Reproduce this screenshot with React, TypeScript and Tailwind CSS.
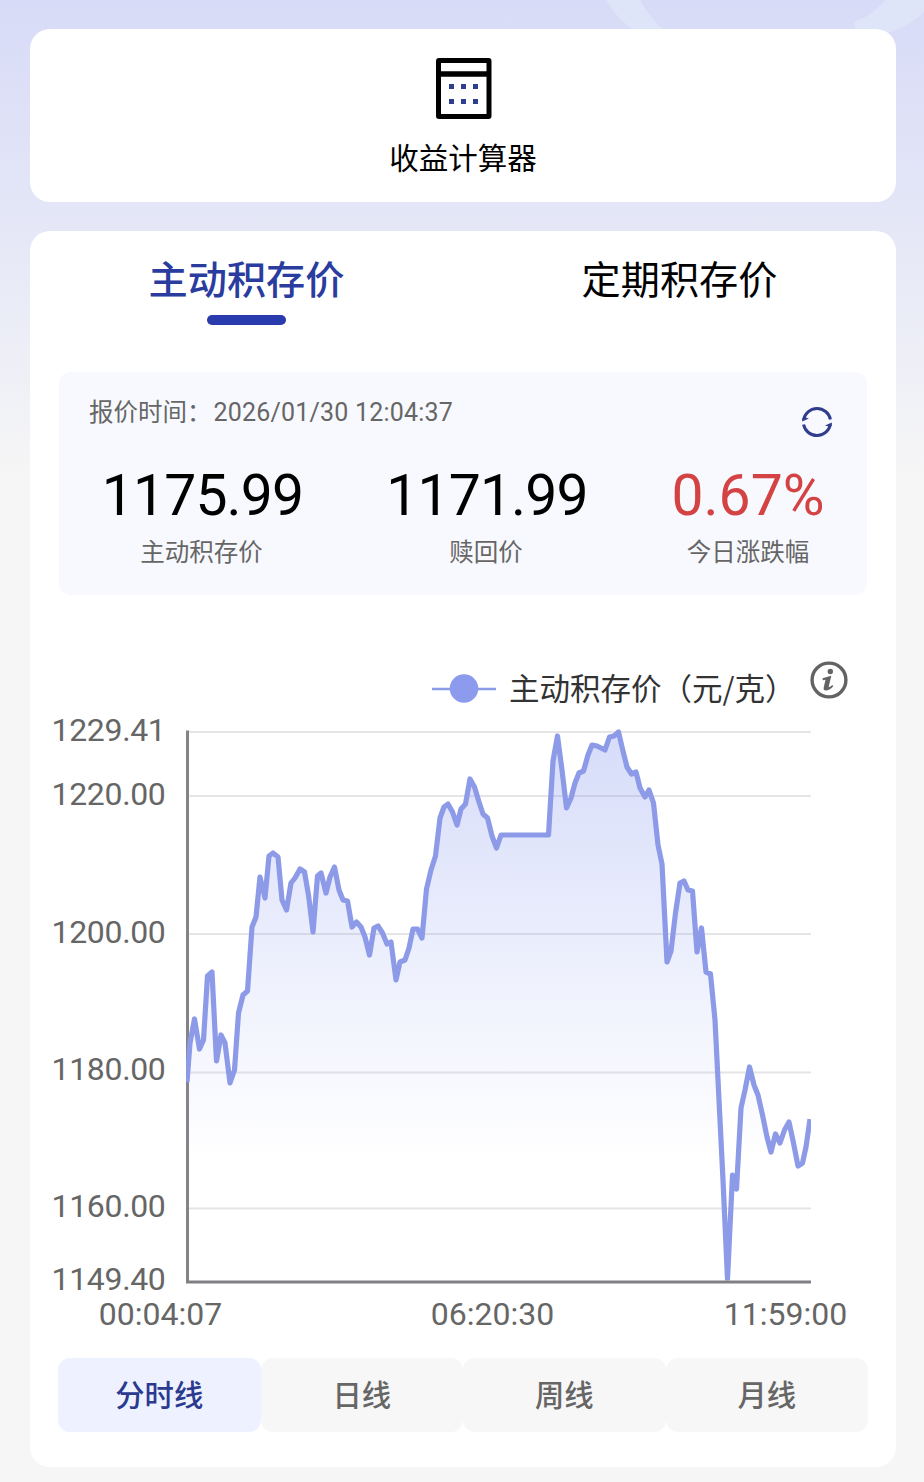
import { useState } from 'react';

const priceTabs = ['主动积存价', '定期积存价'];
const periods = ['分时线', '日线', '周线', '月线'];

const quotes = [
  { value: '1175.99', label: '主动积存价', width: 'w-[285px]', color: 'text-black tracking-[-0.8px] pl-[2px]' },
  { value: '1171.99', label: '赎回价', width: 'w-[284px]', color: 'text-black tracking-[-0.8px] pl-[2px]' },
  { value: '0.67%', label: '今日涨跌幅', width: 'w-[240px]', color: 'text-[#d34343]' },
];

const yTicks = [
  { label: '1229.41', y: 732, textY: 740.5 },
  { label: '1220.00', y: 796, textY: 804.5 },
  { label: '1200.00', y: 934, textY: 942.5 },
  { label: '1180.00', y: 1072.5, textY: 1080 },
  { label: '1160.00', y: 1208.5, textY: 1216.5 },
  { label: '1149.40', y: 0, textY: 1289.5 },
];

const xTicks = [
  { label: '00:04:07', x: 160.5 },
  { label: '06:20:30', x: 492.5 },
  { label: '11:59:00', x: 785.5 },
];

// price points, in chart units
const points = [
  [187, 1082], [190, 1043], [194.5, 1019], [199.5, 1049], [203.5, 1040], [207.5, 976], [212, 972],
  [216.5, 1061], [221, 1035], [225, 1043], [230, 1083], [234.5, 1070], [238.5, 1013], [243, 995],
  [247.5, 991], [252, 927], [256, 917], [260, 877], [265, 898], [269, 856], [273, 853], [278, 857],
  [282, 900], [286.5, 910], [291, 883], [295, 878], [300, 869], [304.5, 872], [308.5, 895], [313, 932],
  [317.5, 876], [321, 873], [326, 893], [330, 877], [334.5, 867], [339, 890], [343, 900], [347.5, 901],
  [352, 927], [356.5, 922], [361, 927], [365, 937], [369.5, 955], [374, 928], [378, 926], [382.5, 933],
  [387, 944], [391, 942], [396, 980], [400, 962], [405, 960], [409, 948], [413, 929], [417.5, 929],
  [422, 938], [426.5, 889], [431, 870], [435.5, 856], [440, 818], [444, 807], [448, 804], [452.5, 812],
  [457, 825], [461, 809], [465.5, 804], [470, 779], [474.5, 787], [479, 802], [483, 814], [487.5, 818],
  [492, 836], [496.5, 848], [501, 835], [548.5, 835], [553, 761], [557.5, 736], [562, 770], [566.5, 808],
  [571, 798], [575, 783], [579, 773], [583.5, 771], [588, 755], [592, 745], [597, 746], [601, 748],
  [605, 750], [609.5, 737], [614, 736], [618.5, 732], [622.5, 749], [627, 767], [631.5, 774], [636, 772],
  [640, 788], [645, 797], [649, 790], [653.5, 803], [658, 845], [662, 864], [667, 962], [671, 951],
  [675.5, 913], [680, 883], [684, 881], [688, 890], [692.5, 891], [697, 952], [701.5, 928], [706, 972],
  [710.5, 974], [715, 1020], [719, 1100], [723, 1180], [727.5, 1279], [732.5, 1175], [736.5, 1189],
  [741, 1108], [745, 1090], [749.5, 1067], [754, 1085], [758, 1095], [762.5, 1115], [767, 1137],
  [771, 1152], [775.5, 1134], [780, 1143], [784.5, 1130], [789, 1122], [793.5, 1143], [798, 1166],
  [802.5, 1163], [806, 1147], [810, 1119],
];

const linePath = 'M' + points.map(([x, y]) => `${x} ${y}`).join('L');

function CalculatorIcon() {
  return (
    <svg className="ml-px" width="56" height="61" viewBox="0 0 56 61">
      <rect x="2.5" y="2.5" width="50.5" height="56" rx="0.5" fill="none" stroke="#000" strokeWidth="5" />
      <path d="M2 16h51" stroke="#000" strokeWidth="5.5" />
      <path d="M13 28.5h29M13 43.5h29" stroke="#2e3f8f" strokeWidth="5" strokeDasharray="5 7" />
    </svg>
  );
}

function RefreshIcon() {
  return (
    <svg width="32" height="32" viewBox="0 0 32 32" fill="none" stroke="#2f3d8c" strokeWidth="3">
      <path d="M2.6 14A13.6 13.6 0 0 1 29.4 13.5" />
      <path d="M29.4 18A13.6 13.6 0 0 1 2.6 18.5" />
      <path d="M1 15.5 1.5 12 4 11.5 8 12.5zM31 16.5 30.5 20 28 20.5 24 19.5z" fill="#2f3d8c" stroke="none" />
    </svg>
  );
}

function InfoIcon() {
  return (
    <svg width="38" height="38" viewBox="0 0 38 38">
      <circle cx="19" cy="19" r="16.9" fill="none" stroke="#636363" strokeWidth="3.4" />
      <circle cx="20.3" cy="10.5" r="2.7" fill="#636363" />
      <path
        d="M12.5 17.3 21.3 14.8 18.6 26.3q1.6-.2 3.9-2.3l.7 1.2q-3.8 4.3-7.4 4.3-2.7-.2-2.1-3.1l1.8-7.7-2.7.5z"
        fill="#636363"
      />
    </svg>
  );
}

function PriceChart() {
  return (
    <svg className="block h-[630px] w-[866px]" viewBox="30 706 866 630">
      <defs>
        <linearGradient id="area" x1="0" y1="732" x2="0" y2="1160" gradientUnits="userSpaceOnUse">
          <stop offset="0" stopColor="#8496ee" stopOpacity="0.33" />
          <stop offset="1" stopColor="#8b9bee" stopOpacity="0" />
        </linearGradient>
        <clipPath id="plot">
          <rect x="186" y="728" width="625" height="552.5" />
        </clipPath>
      </defs>

      {yTicks.map((t) => (
        <g key={t.label}>
          {t.y > 0 && <path d={`M187 ${t.y}H811`} stroke="#e5e5e7" strokeWidth="2.2" />}
          <text x="165.5" y={t.textY} textAnchor="end" className="fill-[#666666] text-[32px] tracking-[-0.35px]">
            {t.label}
          </text>
        </g>
      ))}

      <path d="M187.5 730.5V1281.5" stroke="#848488" strokeWidth="3" />
      <g clipPath="url(#plot)">
        <path d={`${linePath}V1280H187Z`} fill="url(#area)" />
        <path d={linePath} fill="none" stroke="#8c9ae8" strokeWidth="5.2" strokeLinejoin="round" />
      </g>
      <path d="M186 1282H811" stroke="#808084" strokeWidth="3" />

      {xTicks.map((t) => (
        <text key={t.label} x={t.x} y="1325" textAnchor="middle" className="fill-[#666666] text-[32px]">
          {t.label}
        </text>
      ))}
    </svg>
  );
}

function App() {
  const [tab, setTab] = useState(0);
  const [period, setPeriod] = useState(0);

  return (
    <div className="relative h-[1482px] w-[924px] overflow-hidden bg-[#f6f6f6] font-['Roboto','Noto_Sans_CJK_SC',sans-serif]">
      {/* Header backdrop */}
      <div className="absolute inset-x-0 top-0 h-[480px] bg-linear-to-b from-[#d7dbf7] via-[#e6e8f7] via-50% to-[#f6f6f6]" />
      <svg className="absolute top-0 left-0" width="924" height="60" viewBox="0 0 924 60">
        <path d="M606 0h34q10 18 26 32h-30Q616 18 606 0z" fill="#dfe5f9" />
        <path d="M854 22Q872 16 885 0h39v12Q912 24 892 32h-36z" fill="#dfe5f9" />
      </svg>

      <main className="relative flex flex-col gap-[29px] pt-[29px] pr-[28px] pl-[30px]">
        <section className="flex h-[173px] flex-col items-center rounded-[20px] bg-white pt-[29px]">
          <CalculatorIcon />
          <span className="mt-[18px] text-[29.5px] leading-[44px] text-black">收益计算器</span>
        </section>

        <section className="flex h-[1236px] flex-col rounded-[20px] bg-white">
          <div className="flex h-[141px]">
            {priceTabs.map((name, i) => (
              <button key={name} onClick={() => setTab(i)} className="flex flex-1 flex-col items-center pt-[21px]">
                <span
                  className={`text-[39.2px] leading-[58px] ${
                    tab === i ? 'font-medium text-[#2b3c9f]' : 'text-black'
                  }`}
                >
                  {name}
                </span>
                {tab === i && <span className="mt-[5px] h-[10px] w-[79px] rounded-full bg-[#2a3bae]" />}
              </button>
            ))}
          </div>

          {/* Quote panel */}
          <div className="ml-[29px] h-[223px] w-[808px] rounded-[12px] bg-[#f8f9fe]">
            <div className="flex h-[94px] items-start justify-between pr-[34px] pl-[30px]">
              <p className="flex pt-[23px] text-[24.5px] leading-[36px] text-[#666]">
                <span>报价时间：</span>
                <span className="ml-[2px] text-[25px] tracking-[0.2px]">2026/01/30 12:04:37</span>
              </p>
              <button className="mt-[34px]" aria-label="刷新">
                <RefreshIcon />
              </button>
            </div>
            <div className="flex">
              {quotes.map((q) => (
                <div key={q.label} className={`flex shrink-0 flex-col items-center ${q.width}`}>
                  <span className={`text-[57px] leading-[60px] ${q.color}`}>{q.value}</span>
                  <span className="mt-[9px] text-[24.5px] leading-[36px] text-[#666]">{q.label}</span>
                </div>
              ))}
            </div>
          </div>

          {/* Legend */}
          <div className="mt-[66px] flex h-[45px] items-start pl-[402px]">
            <svg className="mt-[12px]" width="64" height="30" viewBox="0 0 64 30">
              <path d="M0 16h64" stroke="#8c9be8" strokeWidth="2.5" />
              <circle cx="32" cy="15.5" r="14.3" fill="#8c9bee" />
            </svg>
            <span className="mt-[4px] ml-[13px] w-[301px] text-[30.5px] leading-[44px] whitespace-nowrap text-[#333] font-['Noto_Sans_CJK_SC',sans-serif]">
              主动积存价（元/克）
            </span>
            <InfoIcon />
          </div>

          <PriceChart />

          {/* Period switch */}
          <div className="mt-[22px] ml-[28px] flex w-[810px]">
            {periods.map((name, i) => (
              <button
                key={name}
                onClick={() => setPeriod(i)}
                className={`h-[74px] flex-1 rounded-[12px] pt-[4px] text-[29.3px] font-medium ${
                  period === i ? 'bg-[#eef1ff] text-[#2b3a8f]' : 'bg-[#f7f7f7] text-[#666]'
                }`}
              >
                {name}
              </button>
            ))}
          </div>
        </section>
      </main>
    </div>
  );
}

export default App;
